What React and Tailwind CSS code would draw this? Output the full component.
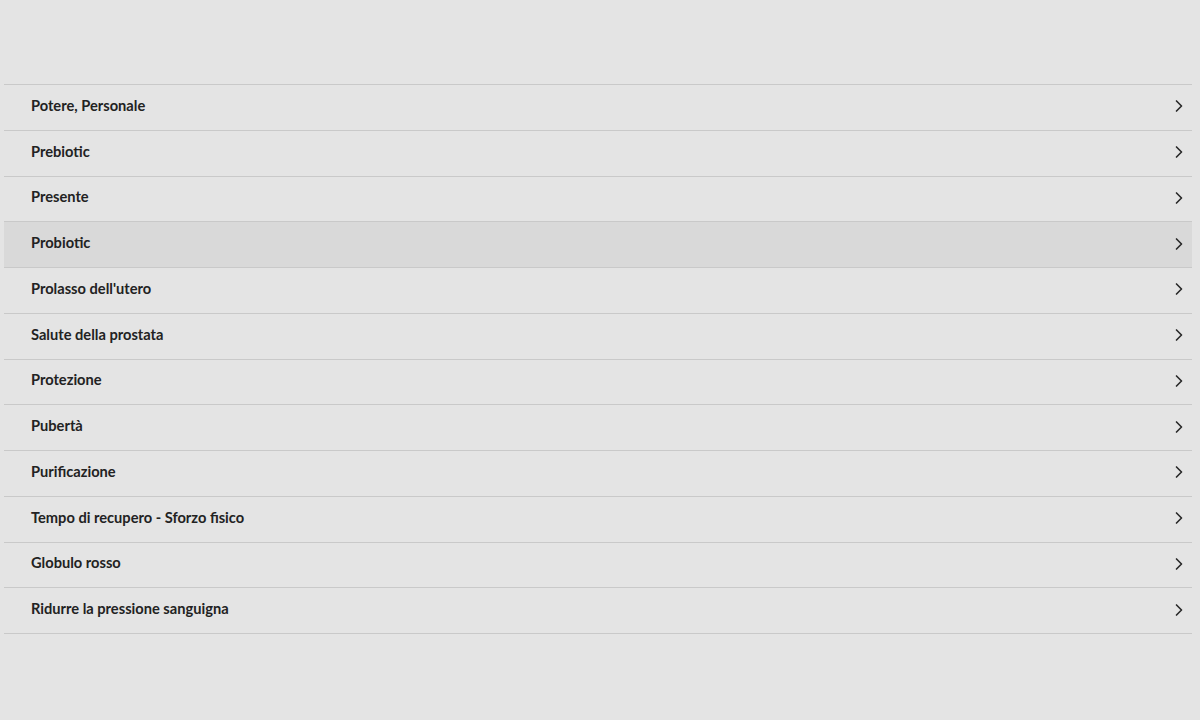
import { ChevronRight } from 'lucide-react';

const items = [
  'Potere, Personale',
  'Prebiotic',
  'Presente',
  'Probiotic',
  "Prolasso dell'utero",
  'Salute della prostata',
  'Protezione',
  'Pubertà',
  'Purificazione',
  'Tempo di recupero - Sforzo fisico',
  'Globulo rosso',
  'Ridurre la pressione sanguigna',
];

export default function App() {
  return (
    <div
      className="min-h-[720px] w-full bg-[#e4e4e4] pt-[84px]"
      style={{ fontFamily: 'Lato, "Noto Sans", sans-serif' }}
    >
      <ul className="ml-1 mr-2 border-t border-[#c9c9c9]">
        {items.map((label) => (
          <li
            key={label}
            className={`flex h-[45.75px] items-center justify-between border-b border-[#c9c9c9] pb-[3px] pl-[27px] pr-[3.5px] ${
              label === 'Probiotic' ? 'bg-[#d9d9d9]' : ''
            }`}
          >
            <span className="text-[14.65px] font-bold text-[#222222]">{label}</span>
            <ChevronRight className="mt-[1px] h-5 w-5 text-[#2a2a2a]" strokeWidth={2} />
          </li>
        ))}
      </ul>
    </div>
  );
}
